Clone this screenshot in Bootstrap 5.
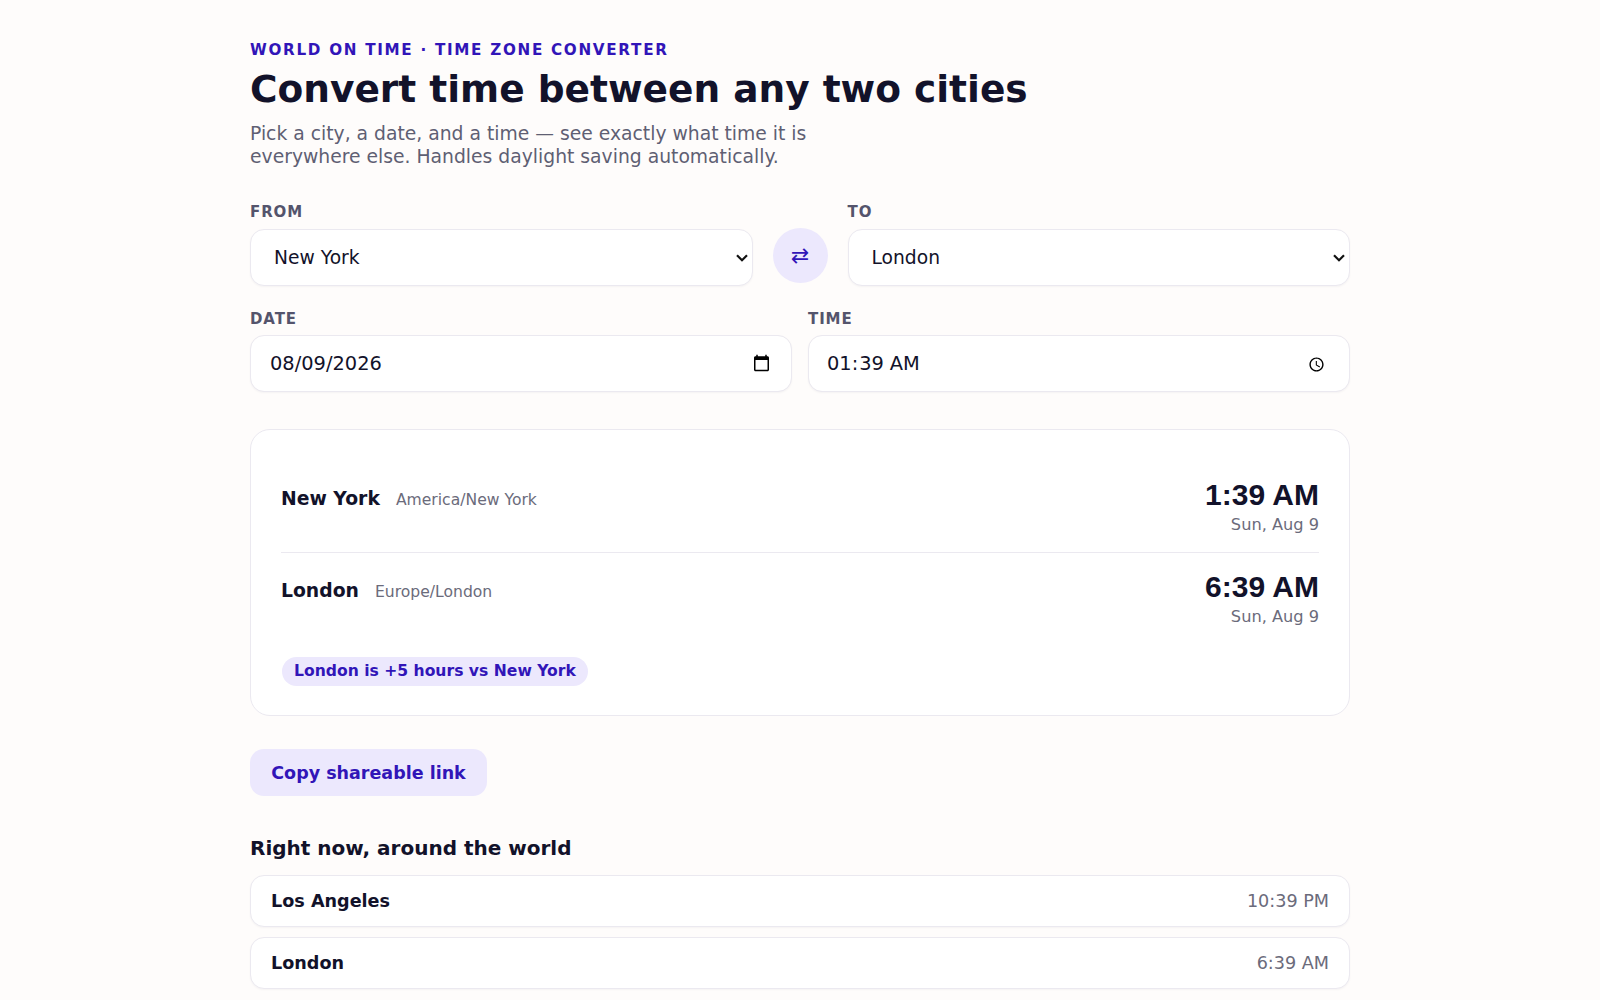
<!DOCTYPE html>
<html lang="en">
<head>
  <meta charset="UTF-8">
  <meta name="viewport" content="width=device-width, initial-scale=1.0">
  <title>World On Time</title>
  <link href="https://cdn.jsdelivr.net/npm/bootstrap@5.3.0/dist/css/bootstrap.min.css" rel="stylesheet">
  <style>
    body { background: #fefcfb; color: #12122a; font-family: "DejaVu Sans", sans-serif; }
    .page { max-width: 1132px; padding: 41px 16px 0; }
    .eyebrow { font-size: 15.2px; font-weight: 700; letter-spacing: 1.7px; color: #3115b8; line-height: 18px; }
    .page h1 { font-size: 37.5px; font-weight: 700; line-height: 45px; color: #12122a; margin: 8px 0 11px; }
    .lead-text { font-size: 18.75px; line-height: 22.5px; color: #5f5f73; max-width: 600px; margin-bottom: 35px; }
    .field-label { display: block; font-size: 15px; font-weight: 700; letter-spacing: 0.9px; color: #54546c; line-height: 18px; margin-bottom: 7px; }
    .field { height: 57px; border: 1px solid #ebe9f0; border-radius: 14px; background-color: #fff; color: #12122a; box-shadow: 0 1px 2px rgba(20, 20, 40, .04); }
    select.field { font-size: 18.7px; padding: 1px 24px 0 23px; background-image: url("data:image/svg+xml,%3csvg xmlns='http://www.w3.org/2000/svg' viewBox='0 0 12 8'%3e%3cpath fill='none' stroke='%23111' stroke-width='2.2' d='M1 1.300 6 6.300 11 1.300'/%3e%3c/svg%3e"); background-position: right 4px center; background-size: 12px 8px; background-repeat: no-repeat; }
    input.field { font-size: 19.4px; padding: 0 18px; }
    input[type=date].field { padding-left: 19px; }
    input[type=time]::-webkit-calendar-picker-indicator { width: 17px; height: 17px; margin: 2px 3px 0 0; }
    .pick-row { gap: 20px; margin-bottom: 24px; }
    .pick-row .field-label { margin-bottom: 8px; }
    .swap { width: 55px; height: 55px; border: 0; border-radius: 50%; background: #ece8fd; color: #3115b8; flex: none; font-size: 22px; line-height: 1; margin-bottom: 3px; }
    .result { border: 1px solid #ebe9f0; border-radius: 20px; background: #fff; padding: 30px; margin-top: 37px; height: 287px; }
    .zone-row { height: 92px; padding-top: 18px; }
    .zone-row + .zone-row { border-top: 1px solid #ebe9f0; padding-top: 17px; }
    .zone-name { padding-top: 7px; }
    .city { font-size: 18.8px; font-weight: 700; color: #12122a; }
    .tz { font-size: 15.6px; color: #6b6b7b; }
    .clock { font-family: "Liberation Sans", Arial, sans-serif; font-size: 30px; font-weight: 700; line-height: 34px; color: #12122a; }
    .day { font-size: 16.2px; color: #6b6b7b; line-height: 20px; margin-top: 3px; }
    .offset-wrap { margin-top: 13px; }
    .offset { font-size: 15.6px; font-weight: 700; color: #3115b8; background: #ece8fd; border-radius: 15px; padding: 0 12px; line-height: 29px; margin-left: 1px; }
    .btn-copy { background: #ece8fd; color: #3115b8; font-size: 17.5px; font-weight: 700; border: 0; border-radius: 14px; height: 47px; width: 237px; padding: 2px 0 0; margin-top: 33px; }
    .btn-copy:hover { background: #ece8fd; color: #3115b8; }
    .page h2 { font-size: 20px; font-weight: 700; color: #12122a; line-height: 24px; margin: 40px 0 15px; }
    .world-row { height: 52px; border: 1px solid #ebe9f0; border-radius: 14px; background: #fff; padding: 1px 20px 0; margin-bottom: 10px; font-size: 17.6px; box-shadow: 0 1px 2px rgba(20, 20, 40, .04); }
    .world-row strong { font-weight: 700; color: #12122a; }
    .world-row span { font-size: 17.6px; color: #6b6b7b; }
  </style>
</head>
<body>
  <div class="container page">
    <div class="eyebrow">WORLD ON TIME · TIME ZONE CONVERTER</div>
    <h1>Convert time between any two cities</h1>
    <p class="lead-text">Pick a city, a date, and a time — see exactly what time it is everywhere else. Handles daylight saving automatically.</p>

    <!-- From / to -->
    <div class="pick-row d-flex align-items-end">
      <div class="flex-fill w-50">
        <label class="field-label" for="from">FROM</label>
        <select id="from" class="form-select field"><option>New York</option><option>London</option></select>
      </div>
      <button class="swap d-flex align-items-center justify-content-center p-0" aria-label="Swap">⇄</button>
      <div class="flex-fill w-50">
        <label class="field-label" for="to">TO</label>
        <select id="to" class="form-select field"><option>London</option><option>New York</option></select>
      </div>
    </div>

    <!-- Date / time -->
    <div class="row g-3">
      <div class="col-6">
        <label class="field-label" for="date">DATE</label>
        <input id="date" type="date" class="form-control field" value="2026-08-09">
      </div>
      <div class="col-6">
        <label class="field-label" for="time">TIME</label>
        <input id="time" type="time" class="form-control field" value="01:39">
      </div>
    </div>

    <div class="result">
      <div class="zone-row d-flex justify-content-between align-items-start">
        <div class="zone-name d-flex align-items-baseline gap-3"><span class="city">New York</span><span class="tz">America/New York</span></div>
        <div class="text-end"><div class="clock">1:39 AM</div><div class="day">Sun, Aug 9</div></div>
      </div>
      <div class="zone-row d-flex justify-content-between align-items-start">
        <div class="zone-name d-flex align-items-baseline gap-3"><span class="city">London</span><span class="tz">Europe/London</span></div>
        <div class="text-end"><div class="clock">6:39 AM</div><div class="day">Sun, Aug 9</div></div>
      </div>
      <div class="offset-wrap"><span class="offset d-inline-block">London is +5 hours vs New York</span></div>
    </div>

    <button class="btn btn-copy">Copy shareable link</button>

    <h2>Right now, around the world</h2>
    <div class="world-row d-flex justify-content-between align-items-center"><strong>Los Angeles</strong><span>10:39 PM</span></div>
    <div class="world-row d-flex justify-content-between align-items-center"><strong>London</strong><span>6:39 AM</span></div>
  </div>

  <script src="https://cdn.jsdelivr.net/npm/bootstrap@5.3.0/dist/js/bootstrap.bundle.min.js"></script>
</body>
</html>
